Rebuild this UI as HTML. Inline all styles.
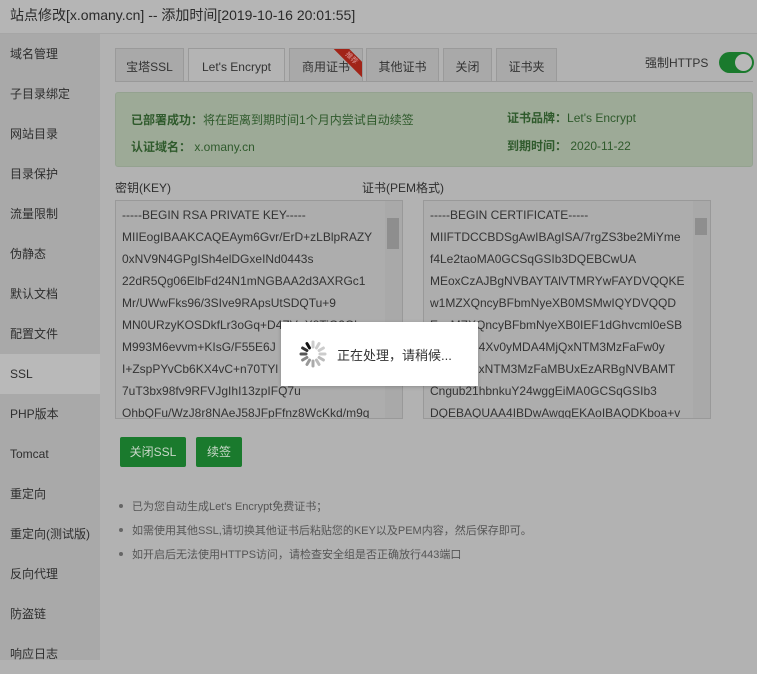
<!DOCTYPE html>
<html style="background:#b2b2b2"><head><meta charset="utf-8"><style>
*{margin:0;padding:0;box-sizing:border-box}
body{width:757px;height:660px;overflow:hidden;background:#b2b2b2;font-family:"Liberation Sans","Noto Sans CJK SC",sans-serif;font-size:12px;color:#2e2e2e;position:relative}
.hd{position:absolute;left:0;top:0;width:757px;height:34px;background:#b5b5b5;border-bottom:1px solid #a6a6a6;font-size:14px;line-height:30px;padding-left:10px;color:#2a2a2a}
.sb{position:absolute;left:0;top:34px;width:100px;height:626px;background:#a9a9a9}
.sb div{height:40px;line-height:40px;padding-left:10px;font-size:12px;color:#2e2e2e}
.sb .on{background:#b9b9b9}
.tab{position:absolute;top:48px;height:33px;border:1px solid #9a9a9a;border-bottom:none;background:#a9a9a9;text-align:center;line-height:36px;font-size:12px;color:#333}
.tab.on{background:#b4b4b4;height:34px}
.line{position:absolute;left:115px;top:81px;width:638px;height:1px;background:#999}
.alert{position:absolute;left:115px;top:92px;width:638px;height:75px;background:#9daa97;border:1px solid #94a290;border-radius:3px;color:#2f5a2c}
.alert b{font-weight:bold}
.ta{position:absolute;top:200px;height:219px;border:1px solid #999;background:#adadad;overflow:hidden;padding:3px 0 0 6px;font-size:12px;line-height:22px;color:#333;white-space:nowrap}
.sc{position:absolute;right:0;top:0;width:17px;height:100%;background:#a9a9a9}
.btn{position:absolute;top:437px;height:30px;background:#1a7a2d;color:#c9d8c9;border-radius:2px;line-height:30px;text-align:center;font-size:12px}
.li{position:absolute;left:132px;font-size:11px;color:#555}
.li:before{content:"";position:absolute;left:-13px;top:6px;width:4px;height:4px;border-radius:50%;background:#666}
</style></head><body>
<div class="hd">站点修改[x.omany.cn] -- 添加时间[2019-10-16 20:01:55]</div>
<div class="sb">
<div>域名管理</div><div>子目录绑定</div><div>网站目录</div><div>目录保护</div><div>流量限制</div><div>伪静态</div><div>默认文档</div><div>配置文件</div><div class="on">SSL</div><div>PHP版本</div><div>Tomcat</div><div>重定向</div><div>重定向(测试版)</div><div>反向代理</div><div>防盗链</div><div>响应日志</div>
</div>
<div class="tab" style="left:115px;width:69px">宝塔SSL</div>
<div class="tab on" style="left:188px;width:97px">Let's Encrypt</div>
<div class="tab" style="left:289px;width:74px;overflow:hidden">商用证书<div style="position:absolute;right:-14px;top:4px;width:50px;height:11px;background:#a12418;transform:rotate(45deg);color:#d99;font-size:7px;line-height:11px">推荐</div></div>
<div class="tab" style="left:366px;width:73px">其他证书</div>
<div class="tab" style="left:443px;width:49px">关闭</div>
<div class="tab" style="left:496px;width:61px">证书夹</div>
<div class="line"></div>
<div style="position:absolute;left:645px;top:54px;font-size:12px;color:#333">强制HTTPS</div>
<div style="position:absolute;left:719px;top:52px;width:35px;height:21px;border-radius:11px;background:#1a7a2d"><div style="position:absolute;right:2px;top:2px;width:17px;height:17px;border-radius:50%;background:#b8b8b8"></div></div>
<div class="alert">
<div style="position:absolute;left:15px;top:18px"><b>已部署成功：</b>将在距离到期时间1个月内尝试自动续签</div>
<div style="position:absolute;left:15px;top:45px"><b>认证域名：</b> x.omany.cn</div>
<div style="position:absolute;left:391px;top:16px"><b>证书品牌：</b>Let's Encrypt</div>
<div style="position:absolute;left:391px;top:44px"><b>到期时间：</b> 2020-11-22</div>
</div>
<div style="position:absolute;left:115px;top:179px">密钥(KEY)</div>
<div style="position:absolute;left:362px;top:179px">证书(PEM格式)</div>
<div class="ta" style="left:115px;width:288px">-----BEGIN RSA PRIVATE KEY-----<br>MIIEogIBAAKCAQEAym6Gvr/ErD+zLBlpRAZY<br>0xNV9N4GPgISh4elDGxeINd0443s<br>22dR5Qg06ElbFd24N1mNGBAA2d3AXRGc1<br>Mr/UWwFks96/3SIve9RApsUtSDQTu+9<br>MN0URzyKOSDkfLr3oGq+D4ZV+X8TiO2Ql<br>M993M6evvm+KIsG/F55E6J<br>I+ZspPYvCb6KX4vC+n70TYl<br>7uT3bx98fv9RFVJgIhI13zpIFQ7u<br>OhbQFu/WzJ8r8NAeJ58JFpFfnz8WcKkd/m9q<div class="sc"><div style="position:absolute;left:2px;top:17px;width:12px;height:31px;background:#8e8e8e"></div></div></div>
<div class="ta" style="left:423px;width:288px">-----BEGIN CERTIFICATE-----<br>MIIFTDCCBDSgAwIBAgISA/7rgZS3be2MiYme<br>f4Le2taoMA0GCSqGSIb3DQEBCwUA<br>MEoxCzAJBgNVBAYTAlVTMRYwFAYDVQQKE<br>w1MZXQncyBFbmNyeXB0MSMwIQYDVQQD<br>ExpMZXQncyBFbmNyeXB0IEF1dGhvcml0eSB<br>BgQ3MB4Xv0yMDA4MjQxNTM3MzFaFw0y<br>MDExMjIxNTM3MzFaMBUxEzARBgNVBAMT<br>Cngub21hbnkuY24wggEiMA0GCSqGSIb3<br>DQEBAQUAA4IBDwAwggEKAoIBAQDKboa+v<div class="sc"><div style="position:absolute;left:2px;top:17px;width:12px;height:17px;background:#8e8e8e"></div></div></div>
<div class="btn" style="left:120px;width:66px">关闭SSL</div>
<div class="btn" style="left:196px;width:46px">续签</div>
<div class="li" style="top:498px">已为您自动生成Let's Encrypt免费证书；</div>
<div class="li" style="top:522px">如需使用其他SSL,请切换其他证书后粘贴您的KEY以及PEM内容，然后保存即可。</div>
<div class="li" style="top:546px">如开启后无法使用HTTPS访问，请检查安全组是否正确放行443端口</div>
<div style="position:absolute;left:281px;top:322px;width:197px;height:64px;background:#fff;box-shadow:0 1px 4px rgba(0,0,0,.2)">
<svg style="position:absolute;left:17px;top:17px" width="30" height="30" viewBox="0 0 30 30"><g stroke-width="3" stroke-linecap="round">
<line x1="15" y1="3" x2="15" y2="8" stroke="#ccc"/><line x1="21" y1="4.6" x2="18.5" y2="8.9" stroke="#ccc"/><line x1="25.4" y1="9" x2="21.1" y2="11.5" stroke="#ccc"/><line x1="27" y1="15" x2="22" y2="15" stroke="#ccc"/><line x1="25.4" y1="21" x2="21.1" y2="18.5" stroke="#bbb"/><line x1="21" y1="25.4" x2="18.5" y2="21.1" stroke="#bbb"/><line x1="15" y1="27" x2="15" y2="22" stroke="#aaa"/><line x1="9" y1="25.4" x2="11.5" y2="21.1" stroke="#999"/><line x1="4.6" y1="21" x2="8.9" y2="18.5" stroke="#888"/><line x1="3" y1="15" x2="8" y2="15" stroke="#555"/><line x1="4.6" y1="9" x2="8.9" y2="11.5" stroke="#333"/><line x1="9" y1="4.6" x2="11.5" y2="8.9" stroke="#111"/></g></svg>
<div style="position:absolute;left:56px;top:23px;font-size:13px;color:#333">正在处理，请稍候...</div>
</div>
</body></html>
